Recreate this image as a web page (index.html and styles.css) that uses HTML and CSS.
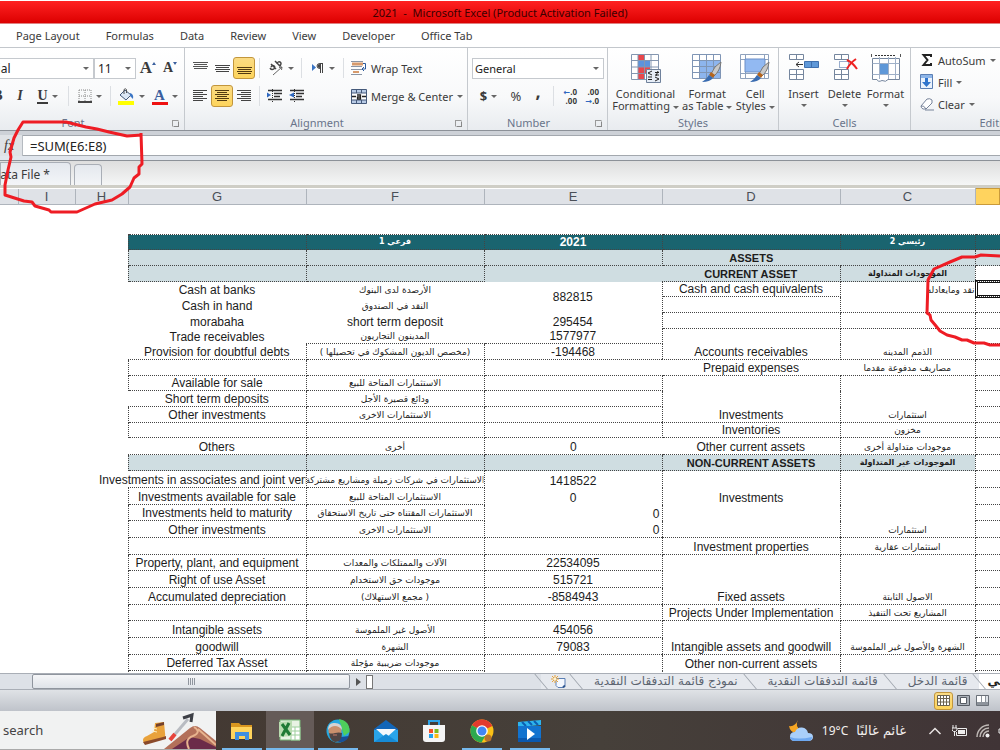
FILE: index.html
```html
<!DOCTYPE html>
<html lang="en">
<head>
    <meta charset="UTF-8">
    <title>2021 - Microsoft Excel</title>
    <meta name="viewport" content="width=device-width, initial-scale=1.0">
    <link rel="stylesheet" href="styles.css">
</head>
<body>

    <header class="title-bar">2021 &nbsp;-&nbsp; Microsoft Excel (Product Activation Failed)</header>

    <nav class="ribbon-tabs">
        <a href="#">Page Layout</a>
        <a href="#">Formulas</a>
        <a href="#">Data</a>
        <a href="#">Review</a>
        <a href="#">View</a>
        <a href="#">Developer</a>
        <a href="#">Office Tab</a>
    </nav>

    <div class="ribbon">
        <!-- Font -->
        <section class="group group-font">
            <div class="row end">
                <span class="combo font-name"><select aria-label="Font"><option>Arial</option></select></span>
                <span class="combo font-size"><select aria-label="Font size"><option>11</option></select></span>
                <button class="tool serif grow" aria-label="Increase font size">A<i class="up"></i></button>
                <button class="tool serif shrink" aria-label="Decrease font size">A<i class="down"></i></button>
            </div>
            <div class="row end">
                <button class="tool serif">B</button>
                <button class="tool serif italic">I</button>
                <button class="tool menu serif underline"><span>U</span></button>
                <i class="sep"></i>
                <button class="tool menu" aria-label="Borders">
                    <svg width="14" height="14" viewBox="0 0 14 14"><path d="M1 1h12M1 7h12M1 1v12M7 1v12M13 1v12" stroke="#888" stroke-dasharray="1 1" fill="none"/><path d="M0 13h14" stroke="#444" stroke-width="2"/></svg>
                </button>
                <i class="sep"></i>
                <button class="tool menu" aria-label="Fill color">
                    <svg width="17" height="17" viewBox="0 0 17 17"><path d="M2 7l5-5 6 5-5 5z" fill="#dce8f6" stroke="#44597a"/><path d="M6 6V1.500q1.500-1.500 2.500 0V5" fill="none" stroke="#555"/><path d="M12 5q4 1 3 6l-3-3z" fill="#3b75c4"/><path d="M0 13h16v4H0z" fill="#ffff00"/></svg>
                </button>
                <button class="tool menu" aria-label="Font color"><span class="font-color">A</span></button>
            </div>
            <h2>Font</h2>
            <i class="launcher"></i>
        </section>

        <!-- Alignment -->
        <section class="group group-align">
            <div class="columns">
                <div class="align-tools">
                    <div class="row">
                        <button class="tool" aria-label="Top align"><svg width="15" height="14" viewBox="0 0 15 14"><path d="M0 1.500h15M1 3.500h13M0 5.500h15M1 7.500h13" stroke="#555"/></svg></button>
                        <button class="tool" aria-label="Middle align"><svg width="15" height="14" viewBox="0 0 15 14"><path d="M0 4.500h15M1 6.500h13M0 8.500h15M1 10.500h13" stroke="#444"/></svg></button>
                        <button class="tool active" aria-label="Bottom align"><svg width="15" height="14" viewBox="0 0 15 14"><path d="M0 6.500h15M1 8.500h13M0 10.500h15M1 12.500h13" stroke="#533a10"/></svg></button>
                        <i class="sep"></i>
                        <button class="tool menu" aria-label="Orientation"><svg width="16" height="16" viewBox="0 0 16 16"><path d="M3 4l5 5M3 7q2-3 4 0M2 8q2 3 5 0M7 1l5 5q2-3 0-4t-3 2" stroke="#444" stroke-width="1.500" fill="none"/><path d="M5 15L14 7M14 7l-3 .5M14 7l-.5 3" stroke="#666" fill="none"/></svg></button>
                        <i class="sep"></i>
                        <button class="tool menu" aria-label="Text direction"><svg width="14" height="12" viewBox="0 0 14 12"><path d="M1 2v7l4-3.500z" fill="#3b75c4"/><path d="M12 1.500H9q-3 0-3 2.500t3 2.500M9.500 1.500V11M11.500 1.500V11" stroke="#444" fill="none"/><path d="M9 2v4Q6.500 6 6.500 4T9 2z" fill="#444"/></svg></button>
                        <i class="sep"></i>
                    </div>
                    <div class="row">
                        <button class="tool" aria-label="Align left"><svg width="14" height="12" viewBox="0 0 14 12"><path d="M0 .5h14M0 2.500h10M0 4.500h14M0 6.500h10M0 8.500h14M0 10.500h10" stroke="#444"/></svg></button>
                        <button class="tool active" aria-label="Center"><svg width="14" height="12" viewBox="0 0 14 12"><path d="M0 .5h14M2 2.500h10M0 4.500h14M2 6.500h10M0 8.500h14M2 10.500h10" stroke="#533a10"/></svg></button>
                        <button class="tool" aria-label="Align right"><svg width="14" height="12" viewBox="0 0 14 12"><path d="M0 .5h14M4 2.500h10M0 4.500h14M4 6.500h10M0 8.500h14M4 10.500h10" stroke="#444"/></svg></button>
                        <i class="sep"></i>
                        <button class="tool" aria-label="Decrease indent"><svg width="16" height="14" viewBox="0 0 16 14"><path d="M1 1.500h14M7 4.500h8M7 7.500h6M1 10.500h14" stroke="#333" stroke-width="1.500"/><path d="M5.500 0v14" stroke="#333" stroke-dasharray="1 1"/><path d="M0 3.500l4 2.500-4 2.500z" fill="#2f68c0"/></svg></button>
                        <button class="tool" aria-label="Increase indent"><svg width="16" height="14" viewBox="0 0 16 14"><path d="M1 1.500h14M7 4.500h8M7 7.500h6M1 10.500h14" stroke="#333" stroke-width="1.500"/><path d="M5.500 0v14" stroke="#333" stroke-dasharray="1 1"/><path d="M5 3.500L0 6l5 2.500z" fill="#2f68c0"/></svg></button>
                    </div>
                </div>
                <div>
                    <div class="row">
                        <button class="tool labelled"><svg width="16" height="16" viewBox="0 0 16 16"><path d="M0 1.500h12M0 6.500h11M0 9.500h11M0 14.500h11" stroke="#8a95a5"/><path d="M1 4h11" stroke="#d79a6c" stroke-width="3"/><path d="M2 12h6" stroke="#d79a6c" stroke-width="2"/><path d="M12 3.500h2.500V9H12M13 7l-2 2 2 2" stroke="#2b5a9c" fill="none"/></svg>Wrap Text</button>
                    </div>
                    <div class="row">
                        <button class="tool labelled menu"><svg width="16" height="15" viewBox="0 0 16 15"><path d="M.5.5h15v14H.5z" fill="#b8cbe6" stroke="#44597a"/><path d="M1 4h14v7H1z" fill="#fff"/><path d="M.5 4h15M.5 11h15M5.500 0v4M10.500 0v4M5.500 11v4M10.500 11v4" stroke="#44597a"/><path d="M1 7.500h4M11 7.500h4M6 6h3.500v4H6.500V8h3" stroke="#222" fill="none" stroke-width="1.300"/></svg><span>Merge &amp; Center</span></button>
                    </div>
                </div>
            </div>
            <h2>Alignment</h2>
            <i class="launcher"></i>
        </section>

        <!-- Number -->
        <section class="group group-number">
            <div class="row">
                <span class="combo format"><select aria-label="Number format"><option>General</option></select></span>
            </div>
            <div class="row">
                <button class="tool menu sign"><b>$</b></button>
                <button class="tool sign">%</button>
                <button class="tool comma">,</button>
                <i class="sep"></i>
                <button class="tool decimal" aria-label="Increase decimal"><span><i>&#8592;</i>.0</span><span>.00</span></button>
                <button class="tool decimal" aria-label="Decrease decimal"><span>.00</span><span><i>&#8594;</i>.0</span></button>
            </div>
            <h2>Number</h2>
            <i class="launcher"></i>
        </section>

        <!-- Styles -->
        <section class="group group-styles">
            <div class="big-row">
                <button class="big wide">
                    <svg width="30" height="30" viewBox="0 0 30 30"><path d="M.5.500h27v25H.5z" fill="#fff"/><path d="M7 0h7v6H7zM7 13h12v7H7z" fill="#e8474c"/><path d="M7 6h12v7H7z" fill="#5b93dc"/><path d="M7 20h6v6H7z" fill="#e8474c"/><path d="M.5.500h27v25H.5zM.5 6.500h27M.5 13h27M.5 19.500h27M7 .5v25M13.500.5v25M20 .5v25" stroke="#8496b0" fill="none"/><path d="M15.500 15.500h14v13h-14z" fill="#e6edf6" stroke="#6f819b"/><path d="M21 17l-4 2 4 2M17 23h4M17 25.500h4M24 18.500h4M24 21h4M27 17l-2 5M24 23l4 2-4 2" stroke="#222" fill="none"/></svg>
                    <span>Conditional</span><span>Formatting <i class="arrow"></i></span>
                </button>
                <button class="big">
                    <svg width="30" height="30" viewBox="0 0 30 30"><path d="M.5.500h28v24H.5z" fill="#fff"/><path d="M7 6h22v18H7z" fill="#8db5ee"/><path d="M.5.500h28v24H.5zM.5 6.500h28M.5 12.500h28M.5 18.500h28M7.500.500v24M14.500.500v24M21.500.500v24" stroke="#7f95b5" fill="none"/><path d="M29 8q-7 4-10 12l3 2q6-5 7-14z" fill="#c9c9c9" stroke="#777"/><path d="M19 18l4 3-2 3-4-3z" fill="#b5651d"/><path d="M17 21l4 3q-3 4-11 4 4-2 7-7z" fill="#3a6cb0"/></svg>
                    <span>Format</span><span>as Table <i class="arrow"></i></span>
                </button>
                <button class="big">
                    <svg width="30" height="30" viewBox="0 0 30 30"><path d="M.5.500h28v24H.5z" fill="#fff"/><path d="M.5.500h28v24H.5zM.5 5.500h28M.5 19.500h28M5.500.500v24M24.500.500v24" stroke="#8fa2bd" fill="none"/><path d="M5 5h20v13H5z" fill="#92b9f2" stroke="#6c8fc6"/><path d="M29 8q-7 4-10 12l3 2q6-5 7-14z" fill="#c9c9c9" stroke="#777"/><path d="M19 18l4 3-2 3-4-3z" fill="#b5651d"/><path d="M17 21l4 3q-3 4-11 4 4-2 7-7z" fill="#3a6cb0"/></svg>
                    <span>Cell</span><span>Styles <i class="arrow"></i></span>
                </button>
            </div>
            <h2>Styles</h2>
        </section>

        <!-- Cells -->
        <section class="group group-cells">
            <div class="big-row">
                <button class="big">
                    <svg width="30" height="30" viewBox="0 0 30 30"><path d="M.5.500h14v5H.5zM7.500.500v5M.5 15.500h14v10H.5zM.5 20.500h14M7.500 15.500v10" fill="#fff" stroke="#75869e"/><path d="M15.500 7.500h14v6h-14z" fill="#5f98d8" stroke="#3f6fae"/><path d="M22.500 8v6" stroke="#3f6fae"/><path d="M14 10.500H7M10 8l-3 2.500 3 2.500" stroke="#333" fill="none"/></svg>
                    <span>Insert</span><i class="arrow"></i>
                </button>
                <button class="big">
                    <svg width="30" height="30" viewBox="0 0 30 30"><path d="M4.500.500h14v5h-14zM11.500.500v5M4.500 15.500h14v10h-14zM4.500 20.500h14M11.500 15.500v10" fill="#fff" stroke="#75869e"/><path d="M9.500 7.500h9v6h-9z" fill="none" stroke="#345c9c" stroke-dasharray="1 1"/><path d="M17 6q6 3 10 9M26 5q-6 4-9 10" stroke="#ee2222" stroke-width="2" fill="none"/></svg>
                    <span>Delete</span><i class="arrow"></i>
                </button>
                <button class="big">
                    <svg width="30" height="30" viewBox="0 0 30 30"><path d="M4 1.500h21" stroke="#333" stroke-dasharray="2 1"/><path d="M.5 0v3M29.500 0v3" stroke="#555"/><path d="M1.500 4.500h27v21H17q-2 3-6 1-4 2-5-1H1.500z" fill="#fff" stroke="#75869e"/><path d="M1.500 9.500h27M1.500 20.500h27M8.500 3v22M17.500 3v22M24.500 3v22" stroke="#9fb0c8"/><path d="M9 10h8v10H9z" fill="#5f98d8"/></svg>
                    <span>Format</span><i class="arrow"></i>
                </button>
            </div>
            <h2>Cells</h2>
        </section>

        <!-- Editing -->
        <section class="group group-edit">
            <div class="stack">
                <button class="tool labelled menu"><svg width="14" height="14" viewBox="0 0 14 14"><path d="M11 4V2H3.500l4 5-4 5H11v-2" stroke="#222" stroke-width="2" fill="none"/></svg><span>AutoSum</span></button>
                <button class="tool labelled menu"><svg width="14" height="16" viewBox="0 0 14 16"><path d="M.5.500h12v14H.5z" fill="#eaf2fc" stroke="#5b7fb4"/><path d="M1 1h11v3H1z" fill="#8db5e8"/><path d="M5 4h3v4h3l-4.500 5L2 8h3z" fill="#2f74cc"/></svg><span>Fill</span></button>
                <button class="tool labelled menu"><svg width="14" height="14" viewBox="0 0 14 14"><path d="M1 9l6-7q3-1 5 1v3l-6 6H3q-2-1-2-3z" fill="#fff" stroke="#77839a"/><path d="M1 9q3-1 5 3M5 13h9" stroke="#77839a" fill="none"/></svg><span>Clear</span></button>
            </div>
            <h2>Editing</h2>
        </section>
    </div>

    <div class="formula-bar">
        <span class="fx">fx</span>
        <input type="text" value="=SUM(E6:E8)" aria-label="Formula">
    </div>

    <div class="doc-tabs">
        <a href="#" class="doc-tab"><span>Data File *</span></a>
        <a href="#" class="doc-tab blank" aria-label="New"></a>
    </div>

    <main class="sheet">
        <table>
            <colgroup>
                <col class="w-cut"><col class="w-i"><col class="w-h"><col class="w-g"><col class="w-f"><col class="w-e"><col class="w-d"><col class="w-c"><col>
            </colgroup>
            <thead>
                <tr><th></th><th>I</th><th>H</th><th>G</th><th>F</th><th>E</th><th>D</th><th>C</th><th class="picked"></th></tr>
            </thead>
            <tbody class="spacer"><tr><td colspan="9"></td></tr></tbody>
            <tbody class="current">
                <tr class="head"><td colspan="3" class="r"></td><td class="t r b"></td><td class="t r b" lang="ar" dir="rtl">فرعي 1</td><td class="t r b">2021</td><td class="t r b"></td><td class="t r b" lang="ar" dir="rtl">رئيسي 2</td><td class="t b"></td></tr>
                <tr class="section"><td colspan="3" class="r"></td><td class="r b"></td><td class="r b"></td><td class="r b"></td><td class="b">ASSETS</td><td class="r b"></td><td class="b"></td></tr>
                <tr class="section"><td colspan="3" class="r"></td><td class="r b"></td><td class="r b"></td><td></td><td class="r b">CURRENT ASSET</td><td class="r b" lang="ar" dir="rtl">الموجودات المتداولة</td><td class="b plain"></td></tr>
                <tr><td colspan="3"></td><td>Cash at banks</td><td lang="ar" dir="rtl">الأرصدة لدى البنوك</td><td class="r middle" rowspan="2">882815</td><td class="r b">Cash and cash equivalents</td><td class="r start" lang="ar" dir="rtl">نقد ومايعادله</td><td class="b selected"></td></tr>
                <tr><td colspan="3"></td><td>Cash in hand</td><td lang="ar" dir="rtl">النقد في الصندوق</td><td class="r b"></td><td class="r b"></td><td class="b"></td></tr>
                <tr><td colspan="3"></td><td>morabaha</td><td>short term deposit</td><td class="r">295454</td><td class="r b"></td><td class="r b"></td><td class="b"></td></tr>
                <tr><td colspan="3"></td><td>Trade receivables</td><td class="b" lang="ar" dir="rtl">المدينون التجاريون</td><td class="r b">1577977</td><td class="r b" rowspan="2">Accounts receivables</td><td class="r b" rowspan="2" lang="ar" dir="rtl">الذمم المدينه</td><td class="b"></td></tr>
                <tr><td colspan="3"></td><td class="r b">Provision for doubtful debts</td><td class="r b" lang="ar" dir="rtl">(مخصص الديون المشكوك في تحصيلها )</td><td class="r b">-194468</td><td class="b"></td></tr>
                <tr><td colspan="3" class="r"></td><td class="r b"></td><td class="r b"></td><td class="b"></td><td class="b">Prepaid expenses</td><td class="r b" lang="ar" dir="rtl">مصاريف مدفوعة مقدما</td><td class="b"></td></tr>
                <tr><td colspan="3" class="r"></td><td class="r b">Available for sale</td><td class="r b" lang="ar" dir="rtl">الاستثمارات المتاحة للبيع</td><td class="r b"></td><td class="r b" rowspan="3">Investments</td><td class="r b" rowspan="3" lang="ar" dir="rtl">استثمارات</td><td class="b"></td></tr>
                <tr><td colspan="3"></td><td class="r b">Short term deposits</td><td class="r b" lang="ar" dir="rtl">ودائع قصيرة الأجل</td><td class="r b"></td><td class="b"></td></tr>
                <tr><td colspan="3" class="r"></td><td class="r b">Other investments</td><td class="r b" lang="ar" dir="rtl">الاستثمارات الاخرى</td><td class="r b"></td><td class="b"></td></tr>
                <tr><td colspan="3" class="r"></td><td class="r b"></td><td class="r b"></td><td class="r b"></td><td class="r b">Inventories</td><td class="r b" lang="ar" dir="rtl">مخزون</td><td class="b"></td></tr>
            </tbody>
            <tbody class="non-current">
                <tr><td colspan="3"></td><td class="r b">Others</td><td class="r b" lang="ar" dir="rtl">أخرى</td><td class="b">0</td><td class="r b">Other current assets</td><td class="r b" lang="ar" dir="rtl">موجودات متداولة أخرى</td><td class="b"></td></tr>
                <tr class="section"><td colspan="3" class="r"></td><td class="r b"></td><td class="r b"></td><td class="r b"></td><td class="r b">NON-CURRENT ASSETS</td><td class="r b" lang="ar" dir="rtl">الموجودات غير المتداولة</td><td class="b plain"></td></tr>
                <tr><td colspan="3"></td><td class="r b"><div class="spill">Investments in associates and joint ventures</div></td><td class="r b" lang="ar" dir="rtl"><div class="spill cut">الاستثمارات في شركات زميلة ومشاريع مشتركة</div></td><td class="r">1418522</td><td class="r"></td><td class="r b" rowspan="4" lang="ar" dir="rtl">استثمارات</td><td class="b"></td></tr>
                <tr><td colspan="3" class="r"></td><td class="r b">Investments available for sale</td><td class="r b" lang="ar" dir="rtl">الاستثمارات المتاحة للبيع</td><td class="r">0</td><td class="r">Investments</td><td class="b"></td></tr>
                <tr><td colspan="3" class="r"></td><td class="r b">Investments held to maturity</td><td class="r b" lang="ar" dir="rtl">الاستثمارات المقتناه حتى تاريخ الاستحقاق</td><td class="r number">0</td><td class="r b" rowspan="2"></td><td class="b"></td></tr>
                <tr><td colspan="3" class="r"></td><td class="r b">Other investments</td><td class="r b" lang="ar" dir="rtl">الاستثمارات الاخرى</td><td class="r b number">0</td><td class="b"></td></tr>
                <tr><td colspan="3" class="r"></td><td class="r b"></td><td class="r b"></td><td class="r b"></td><td class="r b">Investment properties</td><td class="r b" lang="ar" dir="rtl">استثمارات عقارية</td><td class="b"></td></tr>
                <tr><td colspan="3" class="r"></td><td class="r b">Property, plant, and equipment</td><td class="r b" lang="ar" dir="rtl">الآلات والممتلكات والمعدات</td><td class="r b">22534095</td><td class="r b" rowspan="3">Fixed assets</td><td class="r b" rowspan="3" lang="ar" dir="rtl">الاصول الثابتة</td><td class="b"></td></tr>
                <tr><td colspan="3" class="r"></td><td class="r b">Right of use Asset</td><td class="r b" lang="ar" dir="rtl">موجودات حق الاستخدام</td><td class="r b">515721</td><td class="b"></td></tr>
                <tr><td colspan="3" class="r"></td><td class="r b">Accumulated depreciation</td><td class="r b" lang="ar" dir="rtl">( مجمع الاستهلاك)</td><td class="r b">-8584943</td><td class="b"></td></tr>
                <tr><td colspan="3" class="r"></td><td class="r b"></td><td class="r b"></td><td class="r b"></td><td class="r b">Projects Under Implementation</td><td class="r b" lang="ar" dir="rtl">المشاريع تحت التنفيذ</td><td class="b"></td></tr>
                <tr><td colspan="3" class="r"></td><td class="r b">Intangible assets</td><td class="r b" lang="ar" dir="rtl">الأصول غير الملموسة</td><td class="r b">454056</td><td class="r b" rowspan="2">Intangible assets and goodwill</td><td class="r b" rowspan="2" lang="ar" dir="rtl">الشهرة والأصول غير الملموسة</td><td class="b"></td></tr>
                <tr><td colspan="3" class="r"></td><td class="r b">goodwill</td><td class="r b" lang="ar" dir="rtl">الشهرة</td><td class="r b">79083</td><td class="b"></td></tr>
                <tr><td colspan="3" class="r"></td><td class="r b">Deferred Tax Asset</td><td class="r b" lang="ar" dir="rtl">موجودات ضريبية مؤجلة</td><td class="r"></td><td class="r">Other non-current assets</td><td class="r"></td><td class="b"></td></tr>
                <tr><td colspan="3" class="r"></td><td class="r"></td><td class="r"></td><td class="r"></td><td class="r"></td><td class="r"></td><td></td></tr>
            </tbody>
        </table>
    </main>

    <div class="sheet-bar">
        <div class="scroll-thumb"><i></i></div>
        <button class="scroll-next" aria-label="Scroll right"></button>
        <i class="splitter"></i>
        <nav class="sheet-tabs">
            <a href="#" class="new-sheet" aria-label="Insert sheet"><svg width="16" height="13" viewBox="0 0 16 13"><path d="M5 3.500h9v7l-2 2H7l-2-2z" fill="#f4f8ff" stroke="#5b7fb4"/><path d="M12 12.500l2-2" stroke="#2d5590" stroke-width="2"/><path d="M4 0v8M0 4h8M1 1l6 6M7 1L1 7" stroke="#e8a33a"/><circle cx="4" cy="4" r="1.500" fill="#fff3cf"/></svg></a>
            <a href="#" lang="ar" dir="rtl">نموذج قائمة التدفقات النقدية</a>
            <a href="#" lang="ar" dir="rtl">قائمة التدفقات النقدية</a>
            <a href="#" lang="ar" dir="rtl">قائمة الدخل</a>
            <a href="#" class="open" lang="ar" dir="rtl">المركز المالي</a>
        </nav>
    </div>

    <div class="status-bar">
        <button class="view active" aria-label="Normal"><svg width="13" height="11" viewBox="0 0 13 11"><path d="M.5.500h12v10H.5zM.5 3.500h12M.5 7h12M3.500.500v10M6.500.500v10M9.500.500v10" fill="#fff" stroke="#6b6350"/></svg></button>
        <button class="view" aria-label="Page layout"><svg width="13" height="11" viewBox="0 0 13 11"><path d="M.5.500h12v10H.5z" fill="#aab0b8" stroke="#555b63"/><path d="M3.500 2.500h6v6h-6z" fill="#fff" stroke="#555b63"/></svg></button>
        <button class="view" aria-label="Page break preview"><svg width="13" height="11" viewBox="0 0 13 11"><path d="M.5.500h12v10H.5z" fill="#8d939b" stroke="#6b7179"/><path d="M1 1h4v6H1zM6 1h3v6H6z" fill="#fff"/><path d="M10 1h2v6h-2z" fill="#dfe3e8"/></svg></button>
    </div>

    <footer class="taskbar">
        <div class="search">
            <input type="text" placeholder="search" aria-label="Type here to search">
            <svg width="74" height="38" viewBox="0 0 74 38">
                <path d="M13 12l9-1 1 11q1 5-3 6l-6 1-12 3q-3-5 3-7l7-4z" fill="#e9a23b"/>
                <path d="M14 13l8-2v3l-8 2z" fill="#74412c"/>
                <path d="M1 31l12-3 8-2 3-1v3l-7 2-14 4z" fill="#8a4a2b"/>
                <path d="M11 17l4 1M10 20l5 1" stroke="#fff0c0"/>
                <path d="M28 29L46 8" stroke="#b9bcc2" stroke-width="3"/>
                <path d="M28 29l5-6" stroke="#e8443c" stroke-width="4"/>
                <path d="M41 7l9-3-1 7" stroke="#3d3f46" stroke-width="3" fill="none"/>
                <path d="M22 38L48 17q5-4 10 0l16 13v8z" fill="#b3705a"/>
                <path d="M30 38l18-12 10 2 16 8v2z" fill="#6b2b49"/>
                <path d="M52 16q8 5-1 9-9 3-4 13M56 18l18 16" stroke="#e8b48f" stroke-width="2" fill="none"/>
            </svg>
        </div>
        <nav class="apps">
            <button class="running" aria-label="File Explorer"><svg width="24" height="22" viewBox="0 0 24 22"><path d="M1 3h8l2 2h11v4H1z" fill="#d9961f"/><path d="M1 7h21v12H1z" fill="#ffd45c"/><path d="M5 12h14v8h-4v-4H9v4H5z" fill="#3f8fe0"/></svg></button>
            <button class="running current-app" aria-label="Excel"><svg width="24" height="24" viewBox="0 0 24 24"><path d="M2 1h20v20H2z" fill="#e8f3e4" stroke="#78b878"/><path d="M13 8h9v13h-9z" fill="#fff" stroke="#9ccf9c"/><path d="M13 12h9M13 16h9M17 8v13" stroke="#9ccf9c"/><path d="M1 3l13-1v15L1 18z" fill="#b9dcb0"/><path d="M4 5l8 11M11 4L4 17" stroke="#1f7a35" stroke-width="3"/></svg></button>
            <button class="running" aria-label="Browser profile"><svg width="24" height="24" viewBox="0 0 24 24"><circle cx="12" cy="12" r="11.500" fill="#25a8e0"/><path d="M13 0q11 2 10.500 13L18 17z" fill="#4fcf5c"/><path d="M12 23q8 1 11-6l-8 1z" fill="#184f96"/><circle cx="9" cy="12" r="6.500" fill="#c9906d"/><path d="M2 11Q2 3 9 4q7 0 7 7-3-4-7-4t-7 4z" fill="#d5d3d3"/><path d="M3 14q2 1 6 0t7 0q0 9-7 9-5-1-6-9z" fill="#4f4544"/><path d="M7 16h4" stroke="#c07868"/></svg></button>
            <button aria-label="Mail"><svg width="24" height="24" viewBox="0 0 24 24"><path d="M0 10l12-9 12 9v3H0z" fill="#1366b8"/><path d="M0 11h24v12H0z" fill="#29a5ea"/><path d="M2 10h20l-10 9z" fill="#f4f8fc"/><path d="M0 23l12-8 12 8z" fill="#178bd6"/></svg></button>
            <button aria-label="Store"><svg width="24" height="24" viewBox="0 0 24 24"><path d="M7 7V2h10v5" stroke="#2da2e6" stroke-width="2" fill="none"/><path d="M1 6h22v14q0 3-3 3H4q-3 0-3-3z" fill="#f5f5f5"/><path d="M7 10h4v4H7z" fill="#f2502a"/><path d="M12.500 10h4v4h-4z" fill="#7dba1e"/><path d="M7 15h4v4H7z" fill="#22a3ee"/><path d="M12.500 15h4v4h-4z" fill="#fdb813"/></svg></button>
            <button class="running" aria-label="Chrome"><svg width="24" height="24" viewBox="0 0 24 24"><circle cx="12" cy="12" r="11.500" fill="#fbc116"/><path d="M12 12L2 6.200A11.500 11.500 0 0 1 22.300 7z" fill="#e33b2e"/><path d="M2 6.200A11.500 11.500 0 0 0 11.500 23.500L17 14l-5-2z" fill="#2da94f"/><circle cx="12" cy="12" r="5.800" fill="#fff"/><circle cx="12" cy="12" r="4.500" fill="#4286f4"/><circle cx="18" cy="19" r="3.500" fill="#b8722a"/></svg></button>
            <button class="running" aria-label="Movies"><svg width="26" height="24" viewBox="0 0 26 24"><path d="M1 3l23-2v5L1 8z" fill="#2db4ee"/><path d="M5 3l4 4M11 2l4 4M17 2l4 4" stroke="#0c5eb0" stroke-width="2"/><path d="M1 7h23v16H1z" fill="#1273cf"/><path d="M1 19h23v4H1z" fill="#0a58ae"/><path d="M10 9l8 6-8 6z" fill="#fff"/></svg></button>
        </nav>
        <div class="tray">
            <svg width="26" height="24" viewBox="0 0 26 24"><path d="M10 1q-4 7 4 11l-6 2q-6-1-7-7 6 1 9-6z" fill="#f6a623"/><path d="M7 22q-5 0-5-4.500T7 13q2-5 7-4.500t6 5.500q5 0 5 4t-5 4z" fill="#a9cffa"/><path d="M6 22q-4-1-4-4 8 3 22 0 0 4-4 4z" fill="#6ea8f0"/></svg>
            <span class="temp">19°C</span>
            <span class="weather" lang="ar" dir="rtl">غائم غالبًا</span>
            <svg class="chevron" width="14" height="10" viewBox="0 0 14 10"><path d="M1.500 8L7 2.500 12.500 8" stroke="#e8e4e2" stroke-width="1.500" fill="none"/></svg>
            <svg width="16" height="12" viewBox="0 0 16 12"><path d="M5.500 3.500h9v7H4.500V7" stroke="#eee" fill="none"/><path d="M6 5h7v4H6z" fill="#eee"/><path d="M1 0v3M4 0v3M0 3h5v2L3.500 6.500h-2L0 5zM2.500 6v5" stroke="#eee" fill="none"/></svg>
            <svg width="14" height="14" viewBox="0 0 14 14"><path d="M1 13A12 12 0 0 1 13 1M4 13a9 9 0 0 1 9-9M7 13a6 6 0 0 1 6-6" stroke="#bdb7b4" stroke-width="1.500" fill="none"/><circle cx="11.500" cy="11.500" r="2" fill="#eee"/></svg>
            <svg width="14" height="12" viewBox="0 0 14 12"><path d="M1 4h3l4-3v10L4 8H1z" fill="none" stroke="#eee"/></svg>
        </div>
    </footer>

    <!-- red pen marks over the formula and the selected cell -->
    <svg class="mark mark-left" width="150" height="100" viewBox="0 0 150 100"><path d="M141 13L142 44L139 47L139 54L134 58L130 67L122 74L112 80L95 84L77 92H51L49 90L35 86L32 82L24 81L5 75V65L8 50L11 37L10 32L14 18L18 10L23 2H66L86 7L97 9L109 12L127 16L142 15"/></svg>
    <svg class="mark mark-right" width="76" height="98" viewBox="0 0 76 98"><path d="M76 4L57 3L51 5H38L26 10L10 17L4 28L3 61L6 63L7 68L12 74L16 79L23 83L31 85L38 88H43L50 91H60L66 93H76"/></svg>

</body>
</html>
```

FILE: styles.css
```css
* {
    box-sizing: border-box;
}

body {
    margin: 0;
    height: 100vh;
    display: flex;
    flex-direction: column;
    position: relative;
    overflow: hidden;
    font-family: "Noto Sans", "DejaVu Sans", sans-serif;
    font-size: 11px;
    color: #3b3b3b;
    background-color: white;
}

a {
    color: inherit;
    text-decoration: none;
}

button {
    font: inherit;
    color: inherit;
    background: none;
    border: 0;
    padding: 0;
}

svg {
    display: block;
    flex: none;
}

[lang="ar"] {
    font-family: "DejaVu Sans", sans-serif;
}

/* title and ribbon tabs */
.title-bar {
    flex: none;
    height: 24px;
    line-height: 23px;
    text-align: center;
    color: #3c0000;
    background: linear-gradient(#ff2222, #dc0000);
    border-top: 1px solid #fff;
    border-bottom: 1px solid #e08080;
}

.ribbon-tabs {
    flex: none;
    display: flex;
    gap: 26px;
    height: 24px;
    padding-left: 16px;
    line-height: 24px;
    border-bottom: 1px solid #c3c7cc;
}

/* ribbon */
.ribbon {
    flex: none;
    display: flex;
    height: 83px;
    overflow: hidden;
    background: linear-gradient(#ffffff, #f8f9fa 60%, #e8ebef);
}

.group {
    position: relative;
    flex: none;
    padding: 6px 4px 0;
    border-right: 1px solid #c5c9ce;
}

.group h2 {
    position: absolute;
    left: 0;
    right: 0;
    bottom: 0;
    margin: 0;
    line-height: 16px;
    font-size: 11px;
    font-weight: normal;
    text-align: center;
    color: #69748a;
}

.group-font {
    width: 185px;
    padding-right: 3px;
    overflow: hidden;
}

.group-font h2 {
    left: -38px;
}

.group-align {
    width: 283px;
}

.group-number {
    width: 140px;
}

.group-align h2,
.group-number h2 {
    right: 18px;
}

.group-styles {
    width: 171px;
    padding-left: 1px;
    padding-right: 0;
}

.group-cells {
    width: 132px;
}

.group-edit {
    width: 174px;
    padding-top: 1px;
}

.columns,
.row,
.big-row {
    display: flex;
}

.row {
    height: 28px;
    align-items: center;
}

.row.end {
    justify-content: flex-end;
}

.align-tools {
    width: 160px;
}

.tool {
    flex: none;
    display: flex;
    align-items: center;
    justify-content: center;
    width: 22px;
    height: 22px;
    white-space: nowrap;
}

.tool.menu {
    width: 33px;
    gap: 4px;
}

.tool.labelled {
    width: auto;
    gap: 4px;
    padding-left: 2px;
    justify-content: flex-start;
}

.menu::after,
.arrow {
    content: "";
    display: inline-block;
    border: 3px solid transparent;
    border-top-color: #666;
    border-bottom-width: 0;
    vertical-align: middle;
}

.active {
    background: linear-gradient(#fbdb84, #fdd45c);
    border: 1px solid #c2963c;
    border-radius: 3px;
}

.sep {
    flex: none;
    width: 1px;
    height: 20px;
    margin: 0 4px;
    background-color: #dcdfe3;
}

.serif {
    position: relative;
    font-family: "Liberation Serif", serif;
    font-size: 14px;
    font-weight: bold;
}

.grow {
    font-size: 17px;
}

.up,
.down {
    width: 0;
    margin-bottom: 10px;
    border: 2px solid transparent;
}

.up {
    border-top-width: 0;
    border-bottom: 3px solid #3a5f9e;
}

.down {
    border-bottom-width: 0;
    border-top: 3px solid #3a5f9e;
}

.italic {
    font-style: italic;
}

.underline span {
    line-height: 13px;
    border-bottom: 2px solid #3b3b3b;
}

.font-color {
    width: 16px;
    line-height: 14px;
    font-family: "Liberation Serif", serif;
    font-size: 15px;
    font-weight: bold;
    color: #3a5f9e;
    border-bottom: 3px solid #ee1111;
}

.sign {
    font-size: 13px;
}

.comma {
    font-size: 18px;
    font-weight: bold;
    line-height: 12px;
    align-items: flex-start;
}

.decimal {
    flex-direction: column;
    align-items: flex-end;
    font-size: 8px;
    font-weight: bold;
    line-height: 9px;
    padding-right: 3px;
}

.decimal i {
    font-style: normal;
    color: #2f68c0;
}

.combo {
    position: relative;
    flex: none;
    display: flex;
    align-items: center;
    height: 21px;
    border: 1px solid #c5c9ce;
    background-color: white;
}

.combo select {
    appearance: none;
    width: 100%;
    padding: 0 3px;
    border: 0;
    font: inherit;
    font-size: 12px;
    color: #222;
    background: none;
}

.combo.format select {
    padding: 0 2px;
    font-size: 11px;
}

.combo::after {
    content: "";
    position: absolute;
    right: 4px;
    border: 3px solid transparent;
    border-top-color: #666;
    border-bottom-width: 0;
}

.font-name {
    width: 113px;
}

.font-size {
    width: 42px;
    margin-right: 1px;
}

.format {
    width: 132px;
}

.launcher {
    position: absolute;
    right: 5px;
    bottom: 4px;
    width: 7px;
    height: 7px;
    border: 1px solid #999;
    border-right-color: transparent;
    border-bottom-color: transparent;
}

.launcher::after {
    content: "";
    position: absolute;
    right: -1px;
    bottom: -1px;
    width: 4px;
    height: 4px;
    border: 1px solid transparent;
    border-right-color: #888;
    border-bottom-color: #888;
}

.big {
    flex: 1;
    display: flex;
    flex-direction: column;
    align-items: center;
    line-height: 12px;
    white-space: nowrap;
}

.big svg {
    margin-bottom: 4px;
}

.big > .arrow {
    margin-top: 4px;
}

.big.wide {
    flex: none;
    width: 73px;
}

.stack {
    padding-left: 3px;
}

/* formula bar */
.formula-bar {
    flex: none;
    display: flex;
    height: 29px;
    border-top: 4px solid #cdd1d7;
    border-bottom: 4px solid #e1e6ed;
    box-shadow: inset 0 1px #a3a8ae, inset 0 -1px #a3a8ae, 0 1px #8c9198, 0 -1px #8c9198;
    position: relative;
}

.fx {
    width: 23px;
    padding-left: 4px;
    line-height: 21px;
    font-family: "Liberation Serif", serif;
    font-size: 14px;
    font-style: italic;
    background-color: #dfe2e6;
    border-right: 1px solid #b5bac0;
}

.formula-bar input {
    flex: 1;
    padding: 0 7px;
    border: 0;
    font: inherit;
    font-size: 13px;
    color: #222;
    background: none;
}

/* workbook tabs */
.doc-tabs {
    flex: none;
    display: flex;
    align-items: flex-end;
    gap: 3px;
    height: 28px;
    overflow: hidden;
    background: linear-gradient(#dddddd, #f5f6f6);
    border-bottom: 3px solid #cfcec6;
}

.doc-tab {
    display: flex;
    justify-content: flex-end;
    width: 71px;
    height: 23px;
    padding-right: 20px;
    line-height: 24px;
    font-size: 12px;
    white-space: nowrap;
    background: linear-gradient(#e4e8ee, #f3f5f8);
    border: 1px solid #a9aeb6;
    border-bottom: 0;
    border-radius: 0 4px 0 0;
}

.doc-tab.blank {
    width: 28px;
    padding: 0;
    height: 21px;
    border-radius: 4px 4px 0 0;
}

/* sheet */
.sheet {
    flex: 1;
    min-height: 0;
    overflow: hidden;
    font-family: "Liberation Sans", Arial, sans-serif;
    font-size: 12px;
    color: #1c1c1c;
}

.sheet table {
    width: 100%;
    table-layout: fixed;
    border-collapse: collapse;
}

.w-cut {
    width: 18px;
}

.w-i {
    width: 57px;
}

.w-h {
    width: 53px;
}

.w-g,
.w-f,
.w-e,
.w-d {
    width: 178px;
}

.w-c {
    width: 135px;
}

.sheet th {
    height: 16px;
    padding: 0;
    line-height: 15px;
    font-size: 13px;
    font-weight: normal;
    color: #4a4f57;
    background-color: #dfe2e7;
    border-right: 1px solid #aeb4bc;
    border-bottom: 1px solid #aeb4bc;
}

.sheet th.picked {
    background-color: #ffd35e;
    border: 1px solid #c99a3a;
}

.spacer tr {
    height: 30px;
}

.sheet td {
    padding: 0;
    line-height: 14px;
    text-align: center;
    vertical-align: bottom;
    white-space: nowrap;
    border: 0 dotted #444;
}

.sheet td[lang="ar"] {
    font-size: 9px;
}

.sheet td.t {
    border-top-width: 1px;
}

.sheet td.r {
    border-right-width: 1px;
}

.sheet td.b {
    border-bottom-width: 1px;
}

.sheet td.middle {
    vertical-align: middle;
}

.sheet td.start {
    text-align: right;
}

.sheet td.number {
    padding-right: 2px;
    text-align: right;
}

.current tr {
    height: 16px;
}

.current tr:nth-child(3n+1) {
    height: 15px;
}

.non-current tr {
    height: 17px;
}

.non-current tr:nth-child(3n+2) {
    height: 16px;
}

.head,
.section {
    font-weight: bold;
}

.section {
    font-size: 11px;
}

.head td[lang="ar"],
.section td[lang="ar"] {
    font-size: 8px;
}

.head td:nth-child(n+2) {
    color: white;
    background-color: #1a646f;
}

.section td:nth-child(n+2) {
    background-color: #cfdde1;
}

.section td.plain:last-child {
    background-color: white;
}

.spill {
    display: flex;
    justify-content: center;
    clip-path: inset(0 0 0 -40px);
}

.spill.cut {
    overflow: hidden;
}

.sheet td.selected {
    position: relative;
}

.selected::after {
    content: "";
    position: absolute;
    inset: -2px -4px -2px -1px;
    border: 3px double #111;
}

/* sheet tabs and horizontal scroll */
.sheet-bar {
    flex: none;
    display: flex;
    align-items: center;
    height: 17px;
    padding-left: 32px;
    overflow: hidden;
    background-color: #dde1e7;
    border-top: 1px solid #a9aeb6;
    border-bottom: 1px solid #a9aeb6;
}

.scroll-thumb {
    flex: none;
    width: 318px;
    height: 15px;
    display: flex;
    align-items: center;
    justify-content: center;
    background: linear-gradient(#f5f6f8, #dfe3e9);
    border: 1px solid #8f959e;
    border-radius: 2px;
}

.scroll-thumb i {
    width: 7px;
    height: 7px;
    background: repeating-linear-gradient(90deg, #8f959e 0 1px, transparent 1px 2px);
}

.scroll-next {
    flex: none;
    width: 0;
    margin: 0 5px 0 6px;
    border: 4px solid transparent;
    border-left: 5px solid #555;
    border-right: 0;
}

.splitter {
    flex: none;
    width: 7px;
    height: 14px;
    background-color: white;
    border: 1px solid #777;
}

.sheet-tabs {
    flex: 1;
    min-width: 0;
    display: flex;
    padding-left: 168px;
    white-space: nowrap;
}

.sheet-tabs a {
    flex: none;
    position: relative;
    height: 16px;
    padding: 0 12px 0 18px;
    line-height: 15px;
    font-size: 12px;
    color: #5c6470;
    background-color: #e6e9ee;
}

.sheet-tabs a::before {
    content: "";
    position: absolute;
    left: 0;
    top: 0;
    height: 16px;
    border-left: 1px solid #9aa0a9;
    transform: skewX(40deg);
}

.sheet-tabs .new-sheet {
    padding: 1px 9px 0 10px;
}

.sheet-tabs .open {
    padding-left: 8px;
    font-weight: bold;
    color: #222;
    background-color: white;
}

.status-bar {
    flex: none;
    display: flex;
    justify-content: flex-end;
    align-items: center;
    gap: 2px;
    height: 21px;
    padding-right: 9px;
    background: linear-gradient(#dfe2e6, #bfc3ca);
}

.view {
    display: flex;
    align-items: center;
    justify-content: center;
    width: 17px;
    height: 18px;
}

.view.active {
    width: 19px;
}

/* taskbar */
.taskbar {
    flex: none;
    display: flex;
    height: 39px;
    color: #f2efee;
    background-color: #43393a;
    background-image: linear-gradient(90deg, #42362f, #46403a 60%, #403436);
}

.search {
    flex: none;
    display: flex;
    width: 216px;
    margin-right: 2px;
    background-color: #f1f2f2;
    border-bottom: 1px solid #aaa;
}

.search input {
    flex: 1;
    min-width: 0;
    padding: 0 3px;
    border: 0;
    font: inherit;
    font-size: 13px;
    background: none;
}

.search input::placeholder {
    color: #444;
}

.apps {
    display: flex;
}

.apps button {
    position: relative;
    width: 48px;
    display: flex;
    align-items: center;
    justify-content: center;
}

.running::after {
    content: "";
    position: absolute;
    left: 4px;
    right: 4px;
    bottom: 0;
    height: 2px;
    background-color: #76b9ed;
}

.apps .current-app {
    background-color: #655b58;
}

.current-app::after {
    left: 0;
    right: 0;
}

.tray {
    margin-left: auto;
    margin-right: -12px;
    display: flex;
    align-items: center;
    gap: 8px;
}

.temp {
    font-size: 12px;
}

.weather {
    font-size: 13px;
}

.chevron {
    margin: 0 2px 0 14px;
}

/* pen marks */
.mark {
    position: absolute;
    fill: none;
    stroke: #ee1c24;
    stroke-width: 3;
    stroke-linejoin: round;
    pointer-events: none;
}

.mark-left {
    left: 0;
    top: 120px;
}

.mark-right {
    right: 0;
    top: 252px;
}
```
